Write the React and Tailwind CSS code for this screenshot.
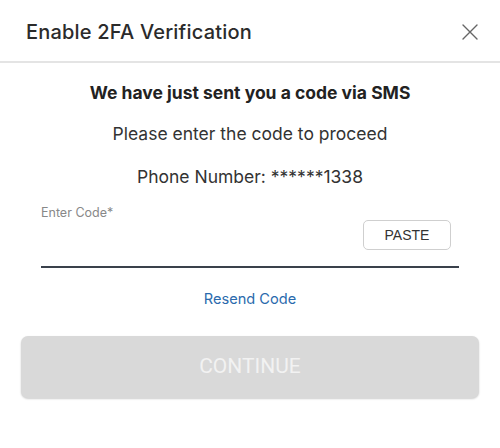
export default function App() {
  const font = { fontFamily: 'Inter, "Open Sans", sans-serif' };
  return (
    <div className="w-[500px] h-[448px] bg-white text-[#222]" style={font}>
      <div className="flex items-center justify-between h-[61px] pl-[26px] pr-[22px] pt-[2px]">
        <h1 className="text-[20px] font-medium text-[#2b2b2b] tracking-[0.2px]">Enable 2FA Verification</h1>
        <svg width="16" height="16" viewBox="0 0 16 16" className="text-[#666]">
          <path d="M1 1L15 15M15 1L1 15" stroke="currentColor" strokeWidth="1.4" strokeLinecap="round" />
        </svg>
      </div>
      <div className="h-[2px] bg-[#e4e4e4]" />
      <div className="flex flex-col items-center pt-[19px]">
        <p className="text-[17.5px] font-bold text-[#222] leading-[22px]">We have just sent you a code via SMS</p>
        <p className="text-[17.5px] text-[#333] leading-[22px] mt-[19px]">Please enter the code to proceed</p>
        <p className="text-[17.5px] text-[#333] leading-[22px] mt-[21px]">Phone Number: ******1338</p>
      </div>
      <div className="mx-[41px] mt-[18px]">
        <div className="text-[12.5px] text-[#888] leading-[14px]">Enter Code*</div>
        <div className="flex justify-end pr-[8px] pb-[16px] border-b-2 border-[#3a414b]">
          <button
            className="w-[88px] h-[30px] border border-[#cfcfcf] rounded-[5px] text-[14px] text-[#333] bg-white"
            style={{ fontFamily: '"Liberation Sans", Arial, sans-serif' }}
          >
            PASTE
          </button>
        </div>
      </div>
      <div className="flex justify-center mt-[22px]">
        <span className="text-[14.6px] text-[#2a6aad] leading-[18px]">Resend Code</span>
      </div>
      <div className="px-[21px] mt-[28px]">
        <button
          className="w-full h-[62px] rounded-[7px] bg-[#d9d9d9] text-[#f2f2f2] text-[21px] shadow-[0_1px_2px_rgba(0,0,0,0.2)]"
          style={{ fontFamily: 'Roboto, sans-serif' }}
        >
          CONTINUE
        </button>
      </div>
    </div>
  );
}
